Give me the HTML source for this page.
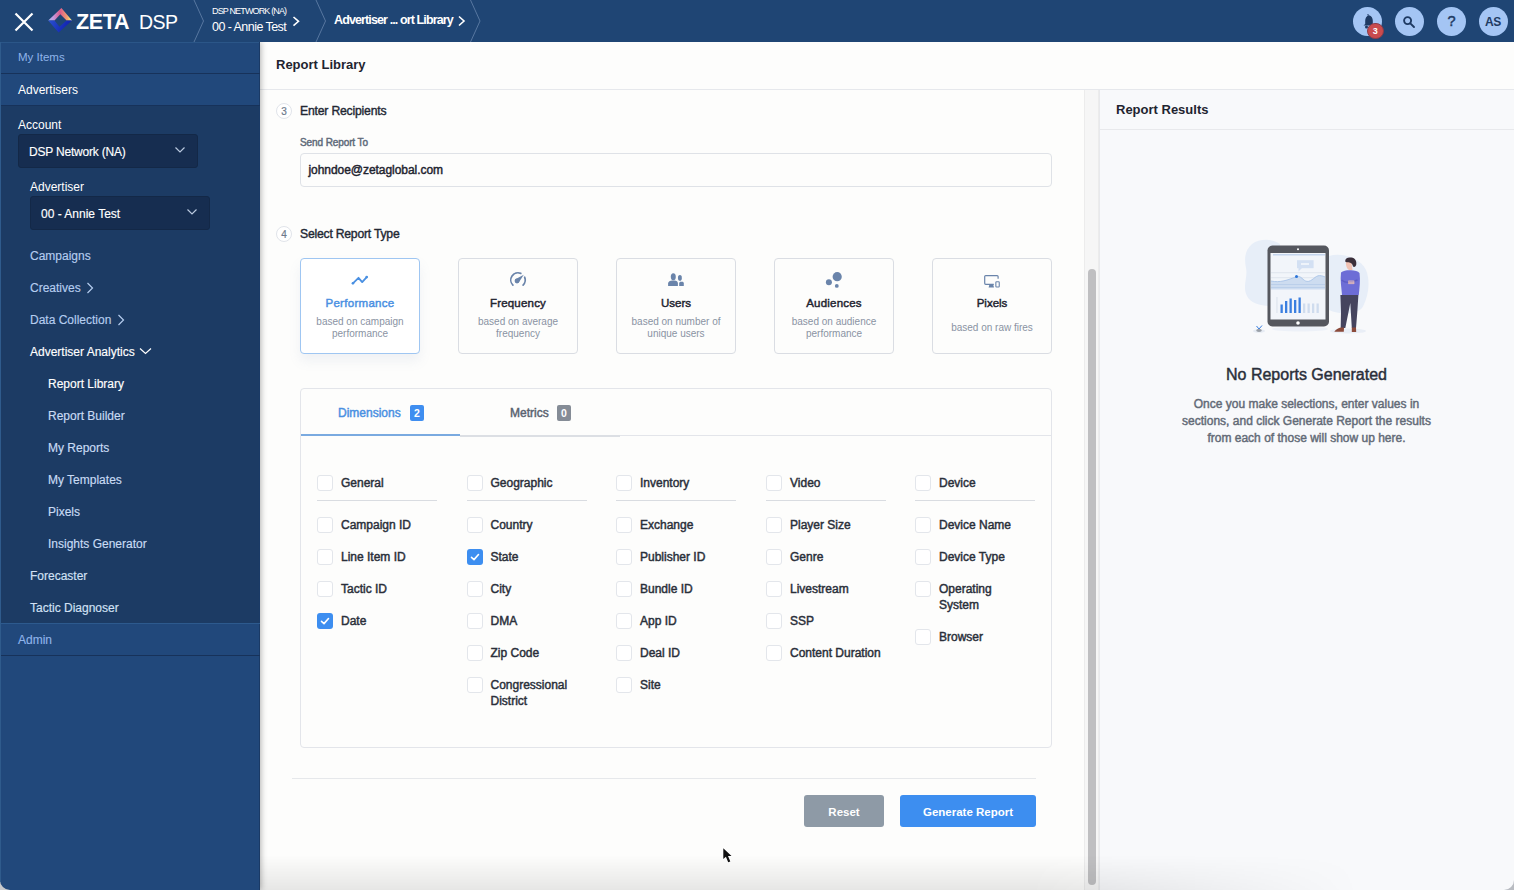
<!DOCTYPE html>
<html><head><meta charset="utf-8">
<style>
*{box-sizing:border-box;margin:0;padding:0}
html,body{width:1514px;height:890px;overflow:hidden;background:#fdfdfc;font-family:"Liberation Sans",sans-serif;position:relative}
.a{position:absolute}
.t{position:absolute;white-space:nowrap;line-height:1}
.b{font-weight:bold}
.sb{-webkit-text-stroke:0.45px currentColor}
.sr{-webkit-text-stroke:0.15px currentColor}
</style></head><body>
<div class="a" style="left:260px;top:42px;width:1254px;height:848px;background:#fdfdfc"></div>
<div class="t b" style="left:276px;top:58px;font-size:13px;color:#1f2430;letter-spacing:0px;">Report Library</div>
<div class="a" style="left:260px;top:89px;width:1254px;height:1px;background:#e6e8ec"></div>
<div class="a" style="left:276px;top:102.5px;width:16px;height:16px;border-radius:50%;border:1px solid #e1e4ea;background:#fff"></div>
<div class="t sb" style="left:276px;top:106.5px;font-size:10px;color:#6e7a8c;letter-spacing:0px;width:16px;text-align:center;-webkit-text-stroke-width:0.2px">3</div>
<div class="t sb" style="left:300px;top:105px;font-size:12.2px;color:#222733;letter-spacing:-0.19px;-webkit-text-stroke-width:0.38px">Enter Recipients</div>
<div class="a" style="left:276px;top:225.5px;width:16px;height:16px;border-radius:50%;border:1px solid #e1e4ea;background:#fff"></div>
<div class="t sb" style="left:276px;top:229.5px;font-size:10px;color:#6e7a8c;letter-spacing:0px;width:16px;text-align:center;-webkit-text-stroke-width:0.2px">4</div>
<div class="t sb" style="left:300px;top:228px;font-size:12.2px;color:#222733;letter-spacing:-0.22px;-webkit-text-stroke-width:0.38px">Select Report Type</div>
<div class="t sb" style="left:300px;top:138px;font-size:10px;color:#5f6b7a;letter-spacing:-0.1px;">Send Report To</div>
<div class="a" style="left:300px;top:153px;width:752px;height:34px;border:1px solid #dfe2e7;border-radius:4px"></div>
<div class="t sb" style="left:308.5px;top:164px;font-size:12px;color:#1f2430;letter-spacing:-0.05px;">johndoe@zetaglobal.com</div>
<div class="a" style="left:300px;top:258px;width:120px;height:96px;border:1px solid #9fc6f2;border-radius:4px;background:#fff;box-shadow:0 7px 12px rgba(120,140,180,.10)"></div>
<svg class="a" style="left:348px;top:268px" width="24" height="24"><g transform="translate(12 12)"><path d="M-7.1 3.3 L-1.5 -2.2 L2.2 2.1 L6.7 -2.9" stroke="#4a90e2" stroke-width="1.8" fill="none" stroke-linecap="round" stroke-linejoin="round"/><circle cx="-7.1" cy="3.3" r="1.3" fill="#4a90e2"/><circle cx="6.7" cy="-2.9" r="1.3" fill="#4a90e2"/></g></svg>
<div class="t sb" style="left:300px;top:298px;font-size:11.5px;color:#4a90e2;letter-spacing:0.3px;width:120px;text-align:center">Performance</div>
<div class="t " style="left:300px;top:317px;font-size:10px;color:#8a93a3;letter-spacing:0px;width:120px;text-align:center">based on campaign</div>
<div class="t " style="left:300px;top:329px;font-size:10px;color:#8a93a3;letter-spacing:0px;width:120px;text-align:center">performance</div>
<div class="a" style="left:458px;top:258px;width:120px;height:96px;border:1px solid #dadde3;border-radius:4px;background:#fdfdfc"></div>
<svg class="a" style="left:506px;top:268px" width="24" height="24"><g transform="translate(12 12)"><path d="M-5.09 5.09 A7.2 7.2 0 0 1 2.81 -6.63 M6.63 -2.81 A7.2 7.2 0 0 1 5.09 5.09" stroke="#6a84aa" stroke-width="1.7" fill="none" stroke-linecap="round"/><path d="M0.62 2.77 L5.8 -5.2 L-2.62 -0.77 Z" fill="#6a84aa"/><circle cx="-1.0" cy="1.0" r="2.4" fill="#6a84aa"/></g></svg>
<div class="t sb" style="left:458px;top:298px;font-size:11.5px;color:#1f2430;letter-spacing:0.2px;width:120px;text-align:center">Frequency</div>
<div class="t " style="left:458px;top:317px;font-size:10px;color:#8a93a3;letter-spacing:0px;width:120px;text-align:center">based on average</div>
<div class="t " style="left:458px;top:329px;font-size:10px;color:#8a93a3;letter-spacing:0px;width:120px;text-align:center">frequency</div>
<div class="a" style="left:616px;top:258px;width:120px;height:96px;border:1px solid #dadde3;border-radius:4px;background:#fdfdfc"></div>
<svg class="a" style="left:664px;top:268px" width="24" height="24"><g transform="translate(12 12)"><ellipse cx="-2.7" cy="-3.3" rx="2.5" ry="3.5" fill="#6a84aa"/><path d="M-7.9 5.9 v-2.6 c0-1.8 2-2.7 4.2-2.9 h2 c2.3 0.2 3.6 1.1 3.6 2.9 v2.6 z" fill="#6a84aa"/><ellipse cx="3.9" cy="-2.1" rx="1.95" ry="2.8" fill="#6a84aa"/><path d="M3.2 5.9 v-2.5 c0-1 0.6-1.6 1.6-1.6 h1.4 c1 0 1.6 0.6 1.6 1.6 v2.5 z" fill="#6a84aa"/></g></svg>
<div class="t sb" style="left:616px;top:298px;font-size:11.5px;color:#1f2430;letter-spacing:0px;width:120px;text-align:center">Users</div>
<div class="t " style="left:616px;top:317px;font-size:10px;color:#8a93a3;letter-spacing:0px;width:120px;text-align:center">based on number of</div>
<div class="t " style="left:616px;top:329px;font-size:10px;color:#8a93a3;letter-spacing:0px;width:120px;text-align:center">unique users</div>
<div class="a" style="left:774px;top:258px;width:120px;height:96px;border:1px solid #dadde3;border-radius:4px;background:#fdfdfc"></div>
<svg class="a" style="left:822px;top:268px" width="24" height="24"><g transform="translate(12 12)"><circle cx="3.2" cy="-3.3" r="4.6" fill="#6a84aa"/><circle cx="-5.1" cy="2.3" r="3" fill="#6a84aa"/><circle cx="2.8" cy="5.9" r="1.9" fill="#6a84aa"/></g></svg>
<div class="t sb" style="left:774px;top:298px;font-size:11.5px;color:#1f2430;letter-spacing:0.2px;width:120px;text-align:center">Audiences</div>
<div class="t " style="left:774px;top:317px;font-size:10px;color:#8a93a3;letter-spacing:0px;width:120px;text-align:center">based on audience</div>
<div class="t " style="left:774px;top:329px;font-size:10px;color:#8a93a3;letter-spacing:0px;width:120px;text-align:center">performance</div>
<div class="a" style="left:932px;top:258px;width:120px;height:96px;border:1px solid #dadde3;border-radius:4px;background:#fdfdfc"></div>
<svg class="a" style="left:980px;top:268px" width="24" height="24"><g transform="translate(12 12)"><path d="M1.8 4.3 H-6.3 a1 1 0 0 1 -1 -1 V-3.4 a1 1 0 0 1 1 -1 H5.1 a1 1 0 0 1 1 1 V-1.2" stroke="#6a84aa" stroke-width="1.2" fill="none"/><path d="M-2.6 4.6 h3.8 l0.8 3 h-5.4z" fill="#6a84aa"/><rect x="3.85" y="1.75" width="3.4" height="5.3" rx="0.7" stroke="#6a84aa" stroke-width="1.1" fill="none"/></g></svg>
<div class="t sb" style="left:932px;top:298px;font-size:11.5px;color:#1f2430;letter-spacing:0px;width:120px;text-align:center">Pixels</div>
<div class="t " style="left:932px;top:322.5px;font-size:10px;color:#8a93a3;letter-spacing:0px;width:120px;text-align:center">based on raw fires</div>
<div class="a" style="left:300px;top:388px;width:752px;height:360px;border:1px solid #e3e5ea;border-radius:4px"></div>
<div class="a" style="left:301px;top:435px;width:750px;height:1px;background:#e3e5ea"></div>
<div class="a" style="left:301px;top:434px;width:159px;height:2px;background:#7aaae0"></div>
<div class="a" style="left:460px;top:435px;width:160px;height:1.5px;background:#dcdfe4"></div>
<div class="t sb" style="left:338px;top:407px;font-size:12px;color:#4a90e2;letter-spacing:0px;">Dimensions</div>
<div class="a" style="left:410px;top:405px;width:14px;height:16px;background:#3f8ef0;border-radius:2px"></div>
<div class="t b" style="left:410px;top:407.5px;font-size:10.5px;color:#fff;letter-spacing:0px;width:14px;text-align:center">2</div>
<div class="t sb" style="left:510px;top:407px;font-size:12px;color:#5a6270;letter-spacing:0px;">Metrics</div>
<div class="a" style="left:557px;top:405px;width:14px;height:16px;background:#858c96;border-radius:2px"></div>
<div class="t b" style="left:557px;top:407.5px;font-size:10.5px;color:#fff;letter-spacing:0px;width:14px;text-align:center">0</div>
<div class="a" style="left:317px;top:475px;width:16px;height:16px;border:1px solid #e3e6eb;border-radius:3px;background:#fff"></div>
<div class="t sb" style="left:341px;top:477px;font-size:12px;color:#2a2f3a;letter-spacing:0px;">General</div>
<div class="a" style="left:317px;top:500px;width:120px;height:1px;background:#d9dce1"></div>
<div class="a" style="left:317px;top:517px;width:16px;height:16px;border:1px solid #e3e6eb;border-radius:3px;background:#fff"></div>
<div class="t sb" style="left:341px;top:518.5px;font-size:12px;color:#2a2f3a;letter-spacing:0px;line-height:16px;top:517px">Campaign ID</div>
<div class="a" style="left:317px;top:549px;width:16px;height:16px;border:1px solid #e3e6eb;border-radius:3px;background:#fff"></div>
<div class="t sb" style="left:341px;top:550.5px;font-size:12px;color:#2a2f3a;letter-spacing:0px;line-height:16px;top:549px">Line Item ID</div>
<div class="a" style="left:317px;top:581px;width:16px;height:16px;border:1px solid #e3e6eb;border-radius:3px;background:#fff"></div>
<div class="t sb" style="left:341px;top:582.5px;font-size:12px;color:#2a2f3a;letter-spacing:0px;line-height:16px;top:581px">Tactic ID</div>
<div class="a" style="left:317px;top:613px;width:16px;height:16px;background:#3d8ef0;border-radius:3px"></div>
<svg class="a" style="left:317px;top:613px" width="16" height="16"><path d="M4.5 8.3 L7 10.6 L11.5 5.5" stroke="#fff" stroke-width="1.6" fill="none" stroke-linecap="round" stroke-linejoin="round"/></svg>
<div class="t sb" style="left:341px;top:614.5px;font-size:12px;color:#2a2f3a;letter-spacing:0px;line-height:16px;top:613px">Date</div>
<div class="a" style="left:466.5px;top:475px;width:16px;height:16px;border:1px solid #e3e6eb;border-radius:3px;background:#fff"></div>
<div class="t sb" style="left:490.5px;top:477px;font-size:12px;color:#2a2f3a;letter-spacing:0px;">Geographic</div>
<div class="a" style="left:466.5px;top:500px;width:120px;height:1px;background:#d9dce1"></div>
<div class="a" style="left:466.5px;top:517px;width:16px;height:16px;border:1px solid #e3e6eb;border-radius:3px;background:#fff"></div>
<div class="t sb" style="left:490.5px;top:518.5px;font-size:12px;color:#2a2f3a;letter-spacing:0px;line-height:16px;top:517px">Country</div>
<div class="a" style="left:466.5px;top:549px;width:16px;height:16px;background:#3d8ef0;border-radius:3px"></div>
<svg class="a" style="left:466.5px;top:549px" width="16" height="16"><path d="M4.5 8.3 L7 10.6 L11.5 5.5" stroke="#fff" stroke-width="1.6" fill="none" stroke-linecap="round" stroke-linejoin="round"/></svg>
<div class="t sb" style="left:490.5px;top:550.5px;font-size:12px;color:#2a2f3a;letter-spacing:0px;line-height:16px;top:549px">State</div>
<div class="a" style="left:466.5px;top:581px;width:16px;height:16px;border:1px solid #e3e6eb;border-radius:3px;background:#fff"></div>
<div class="t sb" style="left:490.5px;top:582.5px;font-size:12px;color:#2a2f3a;letter-spacing:0px;line-height:16px;top:581px">City</div>
<div class="a" style="left:466.5px;top:613px;width:16px;height:16px;border:1px solid #e3e6eb;border-radius:3px;background:#fff"></div>
<div class="t sb" style="left:490.5px;top:614.5px;font-size:12px;color:#2a2f3a;letter-spacing:0px;line-height:16px;top:613px">DMA</div>
<div class="a" style="left:466.5px;top:645px;width:16px;height:16px;border:1px solid #e3e6eb;border-radius:3px;background:#fff"></div>
<div class="t sb" style="left:490.5px;top:646.5px;font-size:12px;color:#2a2f3a;letter-spacing:0px;line-height:16px;top:645px">Zip Code</div>
<div class="a" style="left:466.5px;top:677px;width:16px;height:16px;border:1px solid #e3e6eb;border-radius:3px;background:#fff"></div>
<div class="t sb" style="left:490.5px;top:678.5px;font-size:12px;color:#2a2f3a;letter-spacing:0px;line-height:16px;top:677px">Congressional<br>District</div>
<div class="a" style="left:616px;top:475px;width:16px;height:16px;border:1px solid #e3e6eb;border-radius:3px;background:#fff"></div>
<div class="t sb" style="left:640px;top:477px;font-size:12px;color:#2a2f3a;letter-spacing:0px;">Inventory</div>
<div class="a" style="left:616px;top:500px;width:120px;height:1px;background:#d9dce1"></div>
<div class="a" style="left:616px;top:517px;width:16px;height:16px;border:1px solid #e3e6eb;border-radius:3px;background:#fff"></div>
<div class="t sb" style="left:640px;top:518.5px;font-size:12px;color:#2a2f3a;letter-spacing:0px;line-height:16px;top:517px">Exchange</div>
<div class="a" style="left:616px;top:549px;width:16px;height:16px;border:1px solid #e3e6eb;border-radius:3px;background:#fff"></div>
<div class="t sb" style="left:640px;top:550.5px;font-size:12px;color:#2a2f3a;letter-spacing:0px;line-height:16px;top:549px">Publisher ID</div>
<div class="a" style="left:616px;top:581px;width:16px;height:16px;border:1px solid #e3e6eb;border-radius:3px;background:#fff"></div>
<div class="t sb" style="left:640px;top:582.5px;font-size:12px;color:#2a2f3a;letter-spacing:0px;line-height:16px;top:581px">Bundle ID</div>
<div class="a" style="left:616px;top:613px;width:16px;height:16px;border:1px solid #e3e6eb;border-radius:3px;background:#fff"></div>
<div class="t sb" style="left:640px;top:614.5px;font-size:12px;color:#2a2f3a;letter-spacing:0px;line-height:16px;top:613px">App ID</div>
<div class="a" style="left:616px;top:645px;width:16px;height:16px;border:1px solid #e3e6eb;border-radius:3px;background:#fff"></div>
<div class="t sb" style="left:640px;top:646.5px;font-size:12px;color:#2a2f3a;letter-spacing:0px;line-height:16px;top:645px">Deal ID</div>
<div class="a" style="left:616px;top:677px;width:16px;height:16px;border:1px solid #e3e6eb;border-radius:3px;background:#fff"></div>
<div class="t sb" style="left:640px;top:678.5px;font-size:12px;color:#2a2f3a;letter-spacing:0px;line-height:16px;top:677px">Site</div>
<div class="a" style="left:766px;top:475px;width:16px;height:16px;border:1px solid #e3e6eb;border-radius:3px;background:#fff"></div>
<div class="t sb" style="left:790px;top:477px;font-size:12px;color:#2a2f3a;letter-spacing:0px;">Video</div>
<div class="a" style="left:766px;top:500px;width:120px;height:1px;background:#d9dce1"></div>
<div class="a" style="left:766px;top:517px;width:16px;height:16px;border:1px solid #e3e6eb;border-radius:3px;background:#fff"></div>
<div class="t sb" style="left:790px;top:518.5px;font-size:12px;color:#2a2f3a;letter-spacing:0px;line-height:16px;top:517px">Player Size</div>
<div class="a" style="left:766px;top:549px;width:16px;height:16px;border:1px solid #e3e6eb;border-radius:3px;background:#fff"></div>
<div class="t sb" style="left:790px;top:550.5px;font-size:12px;color:#2a2f3a;letter-spacing:0px;line-height:16px;top:549px">Genre</div>
<div class="a" style="left:766px;top:581px;width:16px;height:16px;border:1px solid #e3e6eb;border-radius:3px;background:#fff"></div>
<div class="t sb" style="left:790px;top:582.5px;font-size:12px;color:#2a2f3a;letter-spacing:0px;line-height:16px;top:581px">Livestream</div>
<div class="a" style="left:766px;top:613px;width:16px;height:16px;border:1px solid #e3e6eb;border-radius:3px;background:#fff"></div>
<div class="t sb" style="left:790px;top:614.5px;font-size:12px;color:#2a2f3a;letter-spacing:0px;line-height:16px;top:613px">SSP</div>
<div class="a" style="left:766px;top:645px;width:16px;height:16px;border:1px solid #e3e6eb;border-radius:3px;background:#fff"></div>
<div class="t sb" style="left:790px;top:646.5px;font-size:12px;color:#2a2f3a;letter-spacing:0px;line-height:16px;top:645px">Content Duration</div>
<div class="a" style="left:915px;top:475px;width:16px;height:16px;border:1px solid #e3e6eb;border-radius:3px;background:#fff"></div>
<div class="t sb" style="left:939px;top:477px;font-size:12px;color:#2a2f3a;letter-spacing:0px;">Device</div>
<div class="a" style="left:915px;top:500px;width:120px;height:1px;background:#d9dce1"></div>
<div class="a" style="left:915px;top:517px;width:16px;height:16px;border:1px solid #e3e6eb;border-radius:3px;background:#fff"></div>
<div class="t sb" style="left:939px;top:518.5px;font-size:12px;color:#2a2f3a;letter-spacing:0px;line-height:16px;top:517px">Device Name</div>
<div class="a" style="left:915px;top:549px;width:16px;height:16px;border:1px solid #e3e6eb;border-radius:3px;background:#fff"></div>
<div class="t sb" style="left:939px;top:550.5px;font-size:12px;color:#2a2f3a;letter-spacing:0px;line-height:16px;top:549px">Device Type</div>
<div class="a" style="left:915px;top:581px;width:16px;height:16px;border:1px solid #e3e6eb;border-radius:3px;background:#fff"></div>
<div class="t sb" style="left:939px;top:582.5px;font-size:12px;color:#2a2f3a;letter-spacing:0px;line-height:16px;top:581px">Operating<br>System</div>
<div class="a" style="left:915px;top:629px;width:16px;height:16px;border:1px solid #e3e6eb;border-radius:3px;background:#fff"></div>
<div class="t sb" style="left:939px;top:630.5px;font-size:12px;color:#2a2f3a;letter-spacing:0px;line-height:16px;top:629px">Browser</div>
<div class="a" style="left:292px;top:778px;width:744px;height:1px;background:#e6e8eb"></div>
<div class="a" style="left:804px;top:795px;width:80px;height:32px;background:#8e9aa6;border-radius:3px"></div>
<div class="t b" style="left:804px;top:806.5px;font-size:11.5px;color:#fff;letter-spacing:0px;width:80px;text-align:center">Reset</div>
<div class="a" style="left:900px;top:795px;width:136px;height:32px;background:#3d8ef0;border-radius:3px"></div>
<div class="t b" style="left:900px;top:806.5px;font-size:11.5px;color:#fff;letter-spacing:0px;width:136px;text-align:center">Generate Report</div>
<div class="a" style="left:1084px;top:90px;width:15px;height:800px;background:#f6f6f6;border-left:1px solid #ececec;border-right:1px solid #ececec"></div>
<div class="a" style="left:1088px;top:269px;width:8px;height:616px;background:#bfbfc1;border-radius:4px"></div>
<div class="a" style="left:1099px;top:90px;width:415px;height:800px;background:#f8f9fb;border-left:1px solid #e8e9ec"></div>
<div class="a" style="left:1100px;top:129px;width:414px;height:1px;background:#e8e9ec"></div>
<div class="t b" style="left:1116px;top:103px;font-size:13px;color:#1f2430;letter-spacing:0px;">Report Results</div>
<div class="t sb" style="left:1099px;top:367px;font-size:16px;color:#2a2f3a;letter-spacing:0px;width:415px;text-align:center">No Reports Generated</div>
<div class="t sb" style="left:1099px;top:397.5px;font-size:12px;color:#636b77;letter-spacing:0px;width:415px;text-align:center">Once you make selections, enter values in</div>
<div class="t sb" style="left:1099px;top:414.5px;font-size:12px;color:#636b77;letter-spacing:0px;width:415px;text-align:center">sections, and click Generate Report the results</div>
<div class="t sb" style="left:1099px;top:431.5px;font-size:12px;color:#636b77;letter-spacing:0px;width:415px;text-align:center">from each of those will show up here.</div>
<svg class="a" style="left:1230px;top:230px" width="150" height="110" viewBox="0 0 150 110">
<path d="M22 14 C30 8 44 9 50 14 L52 74 C40 78 22 76 17 66 C12 56 18 48 16 38 C14 28 15 20 22 14Z" fill="#e7eef8"/>
<path d="M99 26 C112 22 130 28 136 40 C141 52 138 68 132 78 C124 86 108 84 99 80Z" fill="#e7eef8"/>
<ellipse cx="118" cy="101" rx="18" ry="2.5" fill="#e9eef6"/>
<ellipse cx="70" cy="99" rx="28" ry="2.5" fill="#edf1f8"/>
<ellipse cx="29" cy="101" rx="6" ry="1.8" fill="#e6ebf3"/>
<rect x="37.5" y="15.5" width="61.5" height="81" rx="5" fill="#55575e"/>
<rect x="40.5" y="23" width="55" height="66.5" fill="#f2f5fa"/>
<circle cx="68" cy="19.3" r="1" fill="#fff"/>
<circle cx="68" cy="93" r="1.8" fill="#fff"/>
<rect x="43" y="24" width="52" height="1.5" fill="#c5d6ee"/>
<rect x="67" y="30.2" width="16.6" height="8" fill="#d3e0f3"/>
<rect x="71" y="33" width="8" height="2" fill="#eef3fa"/>
<path d="M68.5 38 l0 3.5 l3.5 -3.5z" fill="#d3e0f3"/>
<rect x="41" y="42.3" width="54" height="0.9" fill="#dde3ec"/>
<rect x="41" y="47.3" width="54" height="0.9" fill="#dde3ec"/>
<path d="M41 51 C50 53 58 50 66.5 46.6 C71 45 73 51 77 51.4 C82 52 85 45.5 89.5 45.6 C92 45.6 94 46.5 95 47 L95 59.4 L41 59.4 Z" fill="#cddcf0"/>
<path d="M41 51 C50 53 58 50 66.5 46.6 C71 45 73 51 77 51.4 C82 52 85 45.5 89.5 45.6 C92 45.6 94 46.5 95 47" stroke="#a9c4e8" stroke-width="0.9" fill="none"/>
<circle cx="66.5" cy="46.6" r="1.5" fill="#2a74d8"/>
<rect x="41" y="54" width="54" height="0.9" fill="#b9cde9"/>
<rect x="41" y="57" width="54" height="0.9" fill="#b9cde9"/>
<rect x="46.5" y="67" width="0.9" height="16" fill="#d8dfe9"/>
<rect x="50.5" y="74.5" width="2.3" height="8.5" fill="#3a7fe0"/>
<rect x="55" y="71" width="2.3" height="12" fill="#3a7fe0"/>
<rect x="59.5" y="68.5" width="2.3" height="14.5" fill="#3a7fe0"/>
<rect x="64" y="70" width="2.3" height="13" fill="#3a7fe0"/>
<rect x="68.5" y="67.5" width="2.3" height="15.5" fill="#3a7fe0"/>
<rect x="73" y="73.5" width="2.3" height="9.5" fill="#cfdcee"/>
<rect x="77.5" y="73.5" width="2.3" height="9.5" fill="#cfdcee"/>
<rect x="82" y="73.5" width="2.3" height="9.5" fill="#cfdcee"/>
<rect x="86.5" y="73.5" width="2.3" height="9.5" fill="#cfdcee"/>
<path d="M116 31 C115.5 36 117 39 119.5 40.5 L122.5 40 C122 37 122 34 121 31 Z" fill="#f0c2b4"/>
<path d="M115.2 31.5 C115 28 118 27 121.5 27.6 C125 28.2 127 31 126.2 35 C125.5 37 124 37.5 123 36.5 C122.5 34 121 32.5 118.5 32.2 C117 32 116 32.5 115.2 31.5 Z" fill="#3b2f3a"/>
<path d="M111 42.5 C113 40.5 118 40 120 40.2 C124 40 128 41 129.5 43 C130.5 50 129.5 58 128.8 65 L112 65 C111.5 58 110 50 111 42.5 Z" fill="#6d6dd6"/>
<path d="M111.5 50 C115 53 120 53.5 127.5 50" stroke="#5c5cc4" stroke-width="1.4" fill="none"/>
<path d="M118.3 50.6 h6 v3.5 h-6z" fill="#f0c2b4"/>
<path d="M118.8 51.6 h5 M118.8 53 h5" stroke="#6d6dd6" stroke-width="0.5"/>
<path d="M110.4 65 L128.4 65 L127.3 82 L126 98 L121.8 98 L120.3 73 L115.3 98 L110.7 98 L111 82 Z" fill="#45445e"/>
<path d="M104.3 101.8 C105.5 99.5 108.5 98 111 97.6 L114 97.6 L113.8 101.8 Z M121.8 97.6 L126 97.6 L126.2 102 L121.8 102 Z" fill="#8b4a3a"/>
<path d="M26.5 96 l2.5 3 l3 -3.5" stroke="#3a7fe0" stroke-width="1" fill="none"/>
<ellipse cx="29" cy="100.5" rx="2.8" ry="1.4" fill="#9aa0a8"/>
</svg>
<svg class="a" style="left:721px;top:846px" width="14" height="20"><path d="M2.3 2.3 L2.3 13 L4.9 10.7 L7.2 16.3 L9.3 15.4 L7 10.1 L10.5 10.1 Z" fill="#fff" stroke="#fff" stroke-width="1.8" stroke-linejoin="round"/><path d="M2.3 2.3 L2.3 13 L4.9 10.7 L7.2 16.3 L9.3 15.4 L7 10.1 L10.5 10.1 Z" fill="#111"/></svg>
<div class="a" style="left:260px;top:855px;width:1100px;height:35px;background:linear-gradient(to bottom,rgba(0,0,0,0),rgba(0,0,0,0.09));-webkit-mask-image:linear-gradient(to right,#000 0%,#000 70%,transparent 100%)"></div>
<div class="a" style="left:0px;top:42px;width:260px;height:848px;background:#21487b;box-shadow:1px 0 6px rgba(0,0,0,.3)"></div>
<div class="a" style="left:0px;top:42px;width:260px;height:1px;background:#2b5688"></div>
<div class="a" style="left:259px;top:42px;width:1px;height:848px;background:#1a3a66"></div>
<div class="a" style="left:0px;top:73px;width:260px;height:1px;background:#17325a"></div>
<div class="a" style="left:0px;top:105px;width:260px;height:1px;background:#17325a"></div>
<div class="a" style="left:0px;top:106px;width:259px;height:517px;background:#1c3b64"></div>
<div class="a" style="left:0px;top:623px;width:260px;height:1px;background:#2d5a8e"></div>
<div class="a" style="left:0px;top:655px;width:260px;height:1px;background:#17325a"></div>
<div class="t " style="left:18px;top:52px;font-size:11.5px;color:#8fb4ea;letter-spacing:0px;">My Items</div>
<div class="t " style="left:18px;top:84px;font-size:12px;color:#fff;letter-spacing:0px;">Advertisers</div>
<div class="t " style="left:18px;top:119px;font-size:12px;color:#fff;letter-spacing:0px;">Account</div>
<div class="a" style="left:18px;top:134px;width:180px;height:34px;border-radius:3px;background:#162d50;border:1px solid #132847"></div>
<div class="t sr" style="left:29px;top:146px;font-size:12px;color:#fff;letter-spacing:-0.2px;">DSP Network (NA)</div>
<svg class="a" style="left:174px;top:146px" width="12" height="8"><path d="M1.5 1.5 L6 6 L10.5 1.5" stroke="#b9c8de" stroke-width="1.2" fill="none"/></svg>
<div class="t " style="left:30px;top:181px;font-size:12px;color:#fff;letter-spacing:0px;">Advertiser</div>
<div class="a" style="left:30px;top:196px;width:180px;height:34px;border-radius:3px;background:#162d50;border:1px solid #132847"></div>
<div class="t sr" style="left:41px;top:208px;font-size:12px;color:#fff;letter-spacing:0px;">00 - Annie Test</div>
<svg class="a" style="left:186px;top:208px" width="12" height="8"><path d="M1.5 1.5 L6 6 L10.5 1.5" stroke="#b9c8de" stroke-width="1.2" fill="none"/></svg>
<div class="t sr" style="left:30px;top:250px;font-size:12px;color:#b5cdef;letter-spacing:0px;">Campaigns</div>
<div class="t sr" style="left:30px;top:282px;font-size:12px;color:#b5cdef;letter-spacing:0px;">Creatives</div>
<svg class="a" style="left:86px;top:282px" width="8" height="12"><path d="M1.5 1 L6.5 6 L1.5 11" stroke="#b5cdef" stroke-width="1.2" fill="none"/></svg>
<div class="t sr" style="left:30px;top:314px;font-size:12px;color:#b5cdef;letter-spacing:0px;">Data Collection</div>
<svg class="a" style="left:117px;top:314px" width="8" height="12"><path d="M1.5 1 L6.5 6 L1.5 11" stroke="#b5cdef" stroke-width="1.2" fill="none"/></svg>
<div class="t sr" style="left:30px;top:346px;font-size:12px;color:#fff;letter-spacing:0px;">Advertiser Analytics</div>
<svg class="a" style="left:139px;top:347px" width="13" height="8"><path d="M1 1.5 L6.5 6.5 L12 1.5" stroke="#fff" stroke-width="1.2" fill="none"/></svg>
<div class="t sr" style="left:48px;top:378px;font-size:12px;color:#fff;letter-spacing:0px;">Report Library</div>
<div class="t sr" style="left:48px;top:410px;font-size:12px;color:#c9dbf4;letter-spacing:0px;">Report Builder</div>
<div class="t sr" style="left:48px;top:442px;font-size:12px;color:#c9dbf4;letter-spacing:0px;">My Reports</div>
<div class="t sr" style="left:48px;top:474px;font-size:12px;color:#c9dbf4;letter-spacing:0px;">My Templates</div>
<div class="t sr" style="left:48px;top:506px;font-size:12px;color:#c9dbf4;letter-spacing:0px;">Pixels</div>
<div class="t sr" style="left:48px;top:538px;font-size:12px;color:#c9dbf4;letter-spacing:0px;">Insights Generator</div>
<div class="t sr" style="left:30px;top:570px;font-size:12px;color:#d2e1f5;letter-spacing:0px;">Forecaster</div>
<div class="t sr" style="left:30px;top:602px;font-size:12px;color:#d2e1f5;letter-spacing:0px;">Tactic Diagnoser</div>
<div class="t sr" style="left:18px;top:634px;font-size:12px;color:#8fb4ea;letter-spacing:0px;">Admin</div>
<div class="a" style="left:0px;top:0px;width:1514px;height:42px;background:#1f4574"></div>
<svg class="a" style="left:0;top:0" width="520" height="42">
<path d="M15.5 13.5 L32.5 30.5 M32.5 13.5 L15.5 30.5" stroke="#fff" stroke-width="2.2"/>
<path d="M194 0 L203.5 21 L194 42" stroke="#5877a0" stroke-width="1" fill="none"/>
<path d="M316 0 L325.5 21 L316 42" stroke="#5877a0" stroke-width="1" fill="none"/>
<path d="M470.5 0 L480 21 L470.5 42" stroke="#5877a0" stroke-width="1" fill="none"/>
<path d="M293.5 17 L298.5 21.3 L293.5 25.6" stroke="#fff" stroke-width="1.6" fill="none"/>
<path d="M459 16.5 L464 21 L459 25.5" stroke="#fff" stroke-width="1.6" fill="none"/>
<defs><linearGradient id="lg1" x1="48" y1="0" x2="72" y2="0" gradientUnits="userSpaceOnUse"><stop offset="0" stop-color="#a9b8f0"/><stop offset=".22" stop-color="#c49ae0"/><stop offset=".5" stop-color="#dc5a8a"/><stop offset=".8" stop-color="#f0a070"/><stop offset=".93" stop-color="#f6e27a"/><stop offset="1" stop-color="#ffffff"/></linearGradient>
<linearGradient id="lg2" x1="48" y1="20" x2="72" y2="32" gradientUnits="userSpaceOnUse"><stop offset="0" stop-color="#2a52d0"/><stop offset="1" stop-color="#0a16a8"/></linearGradient></defs>
<path d="M48.2 20.5 L61.4 8.1 L72 20.5 L66.6 20.5 L60.3 14.2 L54.5 20.5 Z" fill="url(#lg1)"/>
<path d="M48.2 20.5 L54.5 20.5 L59.4 26.8 L66.6 20.5 L72 20.5 L58.6 32.5 Z" fill="url(#lg2)"/>
</svg>
<div class="t b" style="left:76px;top:11.5px;font-size:21.5px;color:#fff;letter-spacing:-0.3px;">ZETA</div>
<div class="t " style="left:139px;top:12.5px;font-size:19.5px;color:#fff;letter-spacing:-0.6px;">DSP</div>
<div class="t " style="left:212px;top:6.5px;font-size:9px;color:#fff;letter-spacing:-0.85px;">DSP NETWORK (NA)</div>
<div class="t " style="left:212px;top:20.5px;font-size:12.5px;color:#fff;letter-spacing:-0.55px;">00 - Annie Test</div>
<div class="t b" style="left:334px;top:14px;font-size:12.5px;color:#fff;letter-spacing:-0.88px;">Advertiser ... ort Library</div>
<div class="a" style="left:1352.5px;top:6.5px;width:29px;height:29px;border-radius:50%;background:#a4c5f4"></div>
<div class="a" style="left:1394.5px;top:6.5px;width:29px;height:29px;border-radius:50%;background:#a4c5f4"></div>
<div class="a" style="left:1436.5px;top:6.5px;width:29px;height:29px;border-radius:50%;background:#a4c5f4"></div>
<div class="a" style="left:1478.5px;top:6.5px;width:29px;height:29px;border-radius:50%;background:#a4c5f4"></div>
<svg class="a" style="left:1340px;top:0" width="174" height="42">
<path d="M27 15.2 a1 1 0 0 1 2 0 c2.6 0.7 3.8 3 3.8 5.6 v3.2 l1.7 1.6 h-11 l1.7 -1.6 v-3.2 c0 -2.6 1.2 -4.9 3.8 -5.6z" fill="#1e3a63"/>
<circle cx="26.5" cy="27" r="1.5" fill="#1e3a63"/>
<circle cx="67.6" cy="20.6" r="3.5" stroke="#1e3a63" stroke-width="1.9" fill="none"/>
<path d="M70.3 23.3 L74 27" stroke="#1e3a63" stroke-width="1.9" stroke-linecap="round"/>
</svg>
<div class="a" style="left:1367px;top:22.5px;width:16.5px;height:16.5px;border-radius:50%;background:#c94b4e;border:1px solid #8a3c4a"></div>
<div class="t b" style="left:1367px;top:26.5px;font-size:9px;color:#fff;letter-spacing:0px;width:16.5px;text-align:center">3</div>
<div class="t sb" style="left:1437px;top:13.5px;font-size:14.5px;color:#1e3a63;letter-spacing:0px;width:29px;text-align:center">?</div>
<div class="t b" style="left:1478.5px;top:16px;font-size:12px;color:#1e3a63;letter-spacing:-0.3px;width:29px;text-align:center">AS</div>
<svg class="a" style="left:0;top:880px" width="10" height="10"><path d="M0 0 L0 10 L10 10 A10 10 0 0 1 0 0Z" fill="#c6c8cc"/></svg>
<svg class="a" style="left:1504px;top:880px" width="10" height="10"><path d="M10 0 L10 10 L0 10 A10 10 0 0 0 10 0Z" fill="#b9bcc2"/></svg>
<div class="a" style="left:0px;top:42px;width:1px;height:840px;background:#2f5b8c"></div>
</body></html>
